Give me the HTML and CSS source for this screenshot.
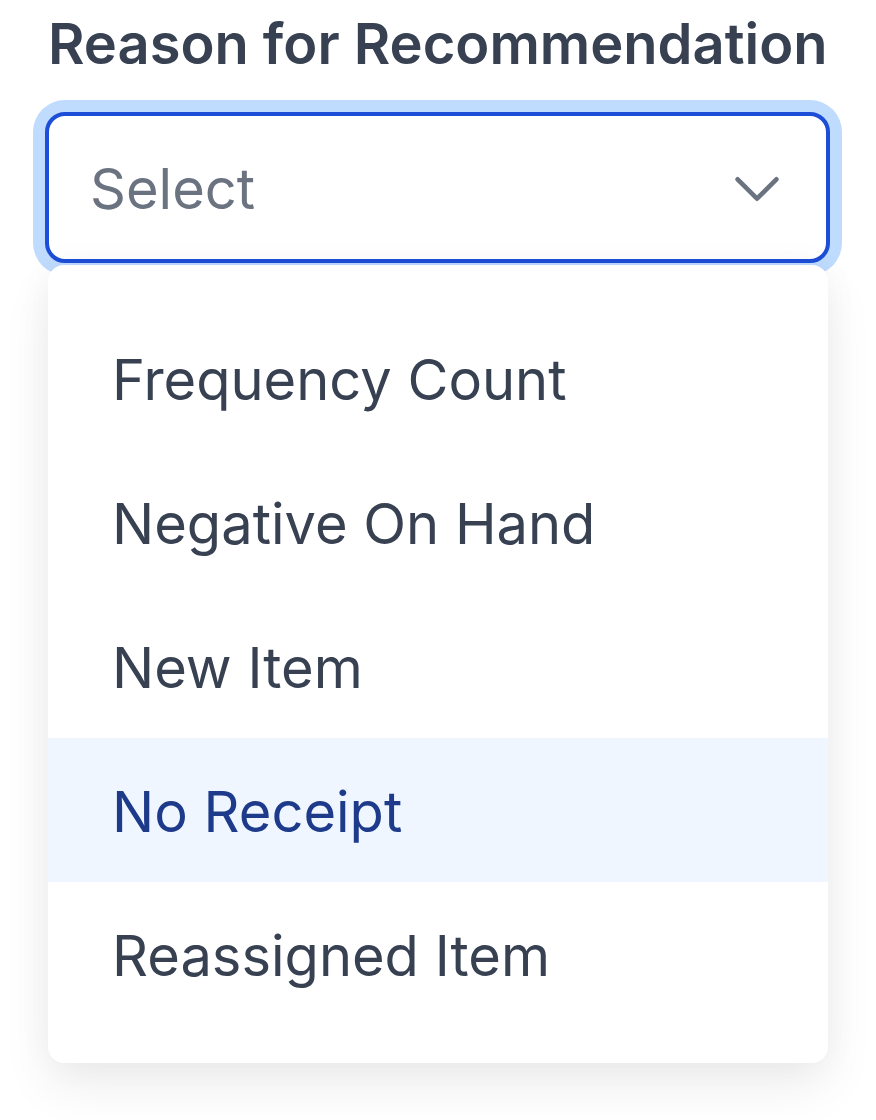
FILE: index.html
```html
<!doctype html>
<html lang="en">
  <head>
    <meta charset="UTF-8" />
    <meta name="viewport" content="width=device-width, initial-scale=1.0" />
    <title>Reason for Recommendation</title>
    <link rel="stylesheet" href="styles.css">
  </head>
  <body>
    <div class="field">
      <label class="field-label" for="reasonSelect">Reason for Recommendation</label>
      <div class="select-box" id="reasonSelect">
        <span class="select-placeholder">Select</span>
        <svg class="chevron" viewBox="0 0 24 24" fill="none" stroke="currentColor" stroke-width="1.8">
          <path stroke-linecap="round" stroke-linejoin="round" d="M19.5 8.25l-7.5 7.5-7.5-7.5" />
        </svg>
      </div>
      <!-- Dropdown options -->
      <ul class="options">
        <li>Frequency Count</li>
        <li>Negative On Hand</li>
        <li>New Item</li>
        <li class="active">No Receipt</li>
        <li>Reassigned Item</li>
      </ul>
    </div>
  </body>
</html>
```

FILE: styles.css
```css
body {
  font-family: 'Inter', 'Noto Sans', sans-serif;
  margin: 0;
  background-color: #fff;
  color: #374151;
}

.field {
  width: 785px;
  padding: 4px 0 60px 45px;
}

.field-label {
  display: block;
  padding-left: 3px;
  font-size: 56px;
  font-weight: 600;
  line-height: 80px;
  color: #374151;
  margin-bottom: 28px;
}

.select-box {
  display: flex;
  align-items: center;
  justify-content: space-between;
  box-sizing: border-box;
  height: 151px;
  padding: 2px 38px 0 41px;
  border: 4px solid #1d4ed8;
  border-radius: 20px;
  box-shadow: 0 0 0 12px #bfdbfe;
  background-color: #fff;
}

.select-placeholder {
  font-size: 56px;
  color: #6b7280;
}

.chevron {
  width: 62px;
  height: 62px;
  color: #6b7280;
}

.options {
  position: relative;
  z-index: 1;
  list-style: none;
  width: 780px;
  margin: 2px 0 0 3px;
  padding: 41px 0 37px;
  background-color: #fff;
  border-radius: 16px;
  box-shadow: 0 24px 50px rgba(0, 0, 0, 0.07), 0 0 36px rgba(0, 0, 0, 0.04);
}

.options li {
  height: 140px;
  line-height: 140px;
  padding: 4px 0 0 64px;
  font-size: 56px;
  color: #374151;
}

.options li.active {
  background-color: #eff6ff;
  color: #1e3a8a;
}
```
